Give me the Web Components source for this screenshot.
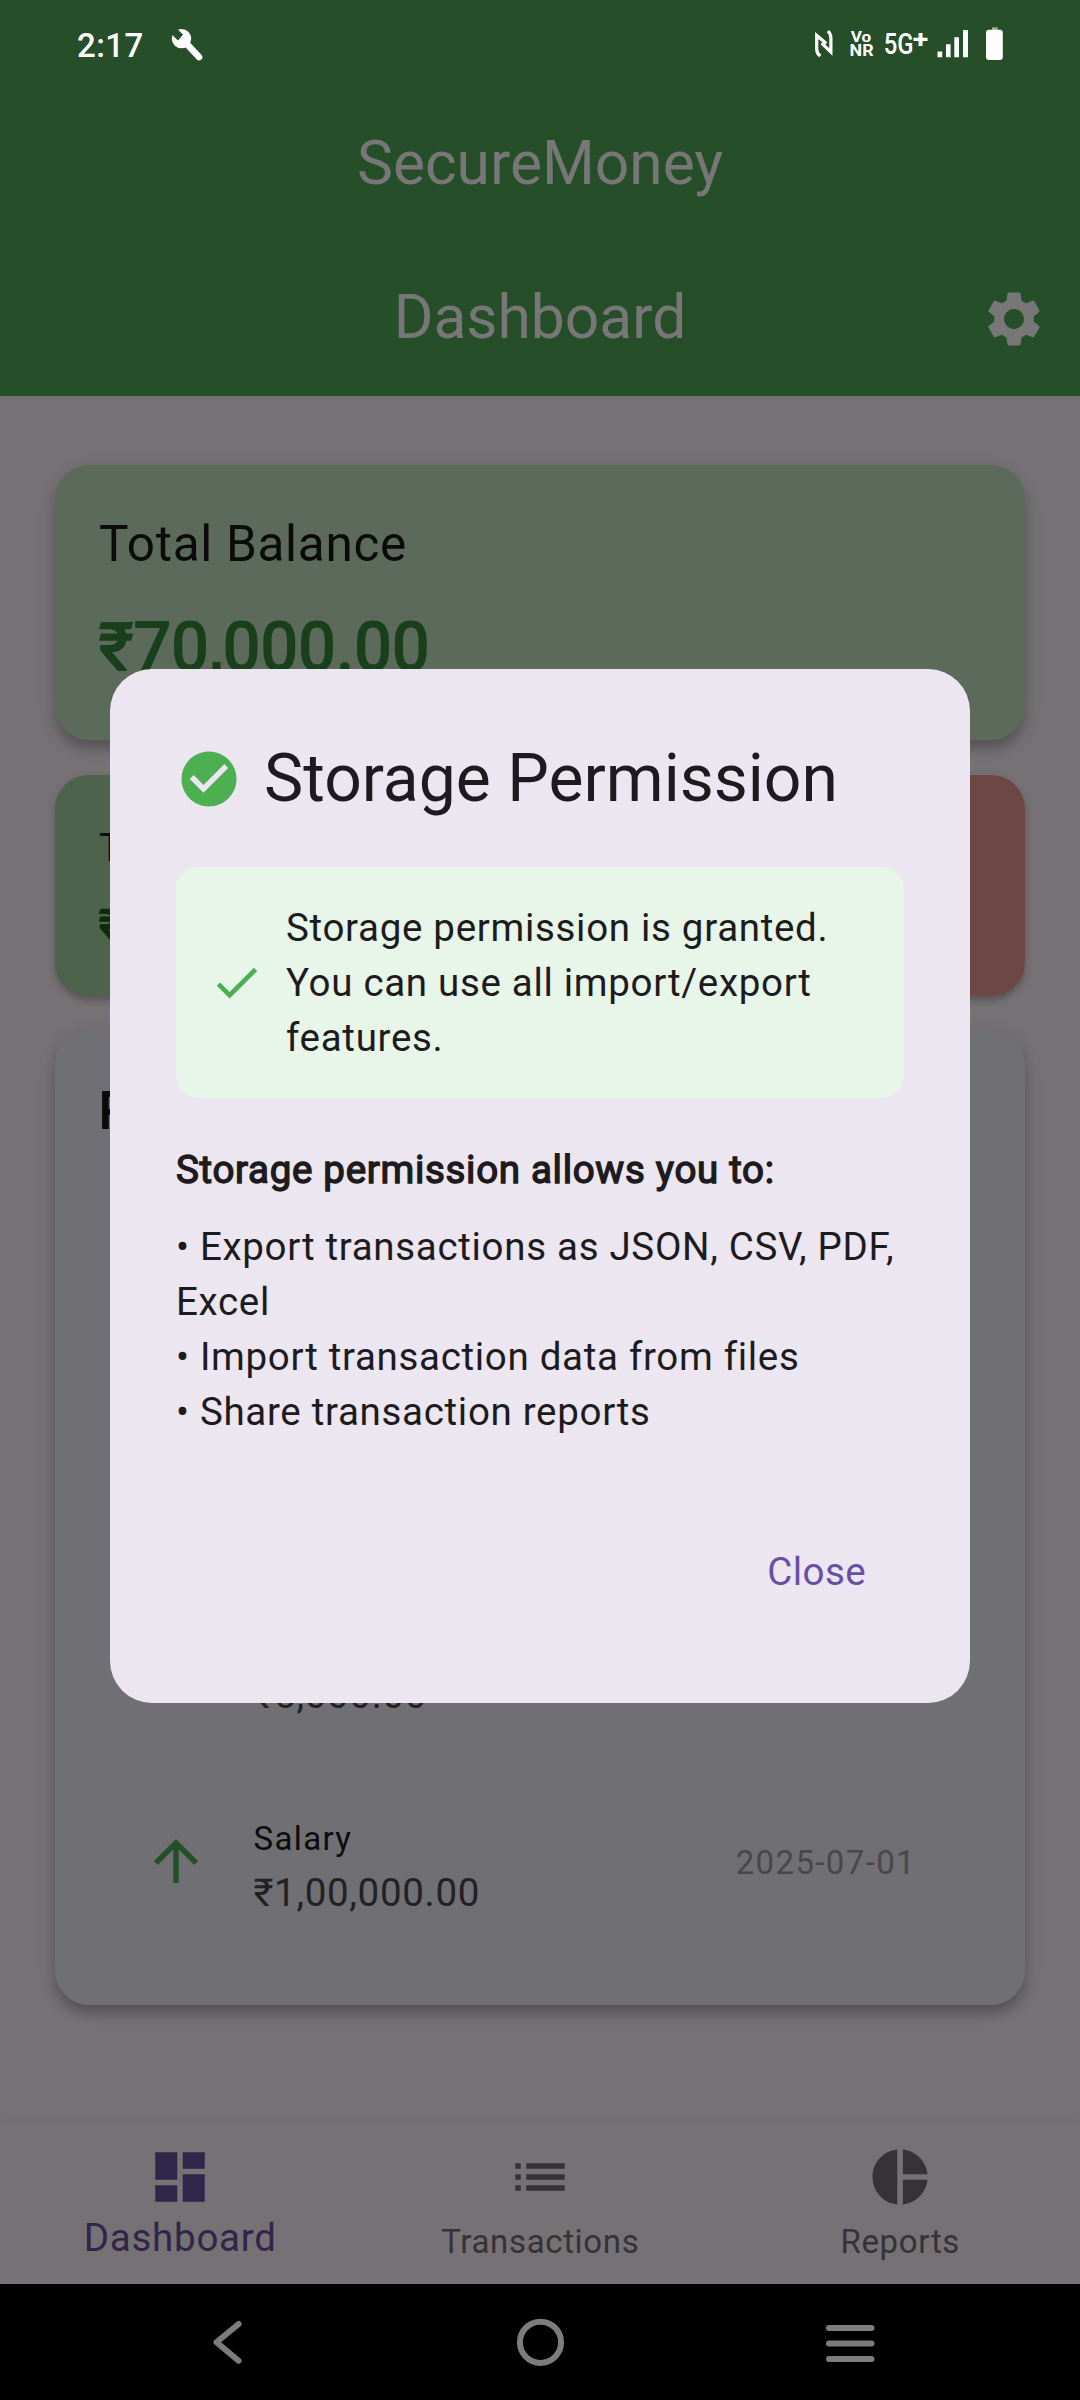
<!DOCTYPE html>
<html lang="en">
<head>
<meta charset="utf-8">
<title>SecureMoney</title>
<style>
html,body{margin:0;padding:0;background:#000}
body{width:1080px;height:2400px;overflow:hidden;font-family:Roboto,"Noto Sans",sans-serif;-webkit-font-smoothing:antialiased}
</style>
</head>
<body>
<money-app></money-app>
<script>
const def = (name, html) => {
  const t = document.createElement('template');
  t.innerHTML = html;
  customElements.define(name, class extends HTMLElement {
    constructor() {
      super();
      this.attachShadow({mode: 'open'}).appendChild(t.content.cloneNode(true));
    }
  });
};

const ICONS = {
  settings: 'M19.14 12.94c.04-.3.06-.61.06-.94 0-.32-.02-.64-.07-.94l2.03-1.58c.18-.14.23-.41.12-.61l-1.92-3.32c-.12-.22-.37-.29-.59-.22l-2.39.96c-.5-.38-1.03-.7-1.62-.94l-.36-2.54c-.04-.24-.24-.41-.48-.41h-3.84c-.24 0-.43.17-.47.41l-.36 2.54c-.59.24-1.13.57-1.62.94l-2.39-.96c-.22-.08-.47 0-.59.22L2.74 8.87c-.12.21-.08.47.12.61l2.03 1.58c-.05.3-.09.63-.09.94s.02.64.07.94l-2.03 1.58c-.18.14-.23.41-.12.61l1.92 3.32c.12.22.37.29.59.22l2.39-.96c.5.38 1.03.7 1.62.94l.36 2.54c.05.24.24.41.48.41h3.84c.24 0 .44-.17.47-.41l.36-2.54c.59-.24 1.13-.56 1.62-.94l2.39.96c.22.08.47 0 .59-.22l1.92-3.32c.12-.22.07-.47-.12-.61l-2.01-1.58zM12 15.6c-1.98 0-3.6-1.62-3.6-3.6s1.62-3.6 3.6-3.6 3.6 1.62 3.6 3.6-1.62 3.6-3.6 3.6z',
  circle: 'M12 2C6.48 2 2 6.48 2 12s4.48 10 10 10 10-4.48 10-10S17.52 2 12 2zm-2 15l-5-5 1.41-1.41L10 14.17l7.59-7.59L19 8l-9 9z',
  check: 'M9 16.17L4.83 12l-1.42 1.41L9 19 21 7l-1.41-1.41z',
  up: 'M4 12l1.41 1.41L11 7.83V20h2V7.83l5.58 5.59L20 12l-8-8-8 8z',
  dashboard: 'M3 13h8V3H3v10zm0 8h8v-6H3v6zm10 0h8V11h-8v10zm0-18v6h8V3h-8z',
  list: 'M3 13h2v-2H3v2zm0 4h2v-2H3v2zm0-8h2V7H3v2zm4 4h14v-2H7v2zm0 4h14v-2H7v2zM7 7v2h14V7H7z',
  pie: 'M11 2v20c-5.07-.5-9-4.79-9-10s3.93-9.5 9-10zm2.03 0v8.99H22c-.47-4.74-4.24-8.52-8.97-8.99zm0 11.01V22c4.74-.47 8.5-4.25 8.97-8.99h-8.97z'
};
customElements.define('md-icon', class extends HTMLElement {
  constructor() {
    super();
    this.attachShadow({mode: 'open'}).innerHTML =
      `<style>:host{display:block;flex:none;width:66px;height:66px}svg{display:block;width:100%;height:100%;fill:currentColor}</style>
       <svg viewBox="0 0 24 24"><path d="${ICONS[this.getAttribute('name')]}"/></svg>`;
  }
});

def('status-bar', `<style>
:host{display:flex;height:88px;color:#fff}
.time{font-size:33px;font-weight:500;line-height:91px;letter-spacing:.4px;padding-left:77px;width:90px}
svg{display:block;flex:none;height:88px;fill:#fff}
.gap{flex:1}
text{font-family:Roboto,sans-serif}
</style>
<div class="time">2:17</div>
<svg width="46" viewBox="167 0 46 88"><circle cx="181.5" cy="38.6" r="9.7"/><path d="M168 32L174 26L183 34.6L178 40.4L172 34.8L170 37z" fill="#254e29"/><path d="M184 41L199 57" stroke="#fff" stroke-width="6.6" stroke-linecap="round"/></svg>
<div class="gap"></div>
<svg width="35" viewBox="810 0 35 88"><g fill="none" stroke="#fff" stroke-width="3.2"><path d="M820.3 56Q816.7 53.5 816.7 49V35.5L826.3 43.5"/><path d="M828 31Q830.9 34 830.9 38V52L821.6 43.2"/></g></svg>
<svg width="35" viewBox="845 0 35 88"><text x="850.8" y="42.4" font-size="15" font-weight="700" textLength="20.5" lengthAdjust="spacingAndGlyphs">Vo</text><text x="849.6" y="56.4" font-size="17.2" font-weight="700" textLength="24" lengthAdjust="spacingAndGlyphs">NR</text></svg>
<svg width="52" viewBox="880 0 52 88"><text x="883.8" y="53.9" font-size="29.4" font-weight="500" textLength="29.8" lengthAdjust="spacingAndGlyphs">5G</text><text x="912.8" y="47.8" font-size="25" font-weight="700" textLength="15.5" lengthAdjust="spacingAndGlyphs">+</text></svg>
<svg width="43" viewBox="932 0 43 88"><path d="M937.5 51.5h4.7v5.8h-4.7zM946 44.3h4.6v13H946zM954.3 37.3h4.7v20h-4.7zM963 30h5v27.3h-5z"/></svg>
<svg width="105" viewBox="975 0 105 88"><path d="M992 27.3h5.8v3H992z" opacity=".55"/><rect x="986" y="29.7" width="16.8" height="30.2" rx="3"/></svg>`);

def('app-header', `<style>
:host{display:flex;flex-direction:column;height:396px;background:#254e29;color:#777;font-size:60.5px}
.bar{display:flex;align-items:center;height:154px;line-height:152px}
.side{flex:1;display:flex;justify-content:flex-end;padding-right:33px;height:66px}
.side:first-child{padding:0 0 0 33px}
.t{height:154px}
</style>
<status-bar></status-bar>
<div class="bar"><div class="side"></div><div class="t">SecureMoney</div><div class="side"></div></div>
<div class="bar"><div class="side"></div><div class="t">Dashboard</div><div class="side"><md-icon name="settings"></md-icon></div></div>`);

def('m-card', `<style>
:host{display:block;box-sizing:border-box;border-radius:34px;padding:44px;background:var(--bg);box-shadow:var(--sh,0 9px 14px -2px rgba(0,0,0,.26),0 5px 20px rgba(0,0,0,.09))}
</style><slot></slot>`);

def('tx-row', `<style>
:host{display:flex;height:198px;align-items:center;padding:0 65px 0 44px}
.i{width:110.5px;color:#235026}
.m{flex:1;padding-top:11px}
.n{font-size:33px;line-height:52px;height:52px;letter-spacing:1.375px;color:#0c0b0d}
.a{font-size:38.5px;line-height:56px;letter-spacing:.6875px;color:#222126}
.d{font-size:33px;line-height:40px;padding-top:3px;letter-spacing:1.375px;color:#484848}
</style><div class="i"><slot name="icon"></slot></div><div class="m"><div class="n"><slot name="name"></slot></div><div class="a"><slot name="amount"></slot></div></div><div class="d"><slot name="date"></slot></div>`);

def('dash-body', `<style>
:host{display:flex;flex-direction:column;box-sizing:border-box;height:1728px;padding:68.5px 55px 0;background:#767175;color:#0b0b0b}
.total{height:275.5px;--bg:#5c6a5b}
.lbl{font-size:49.5px;line-height:70px;letter-spacing:.6875px}
.amt{font-size:66px;line-height:89px;margin-top:24px;letter-spacing:.6875px;color:#19401b;-webkit-text-stroke:2.2px #19401b}
.row{display:flex;gap:22px;margin-top:35px}
.row m-card{flex:1;height:221px;--sh:0 5px 7px -1px rgba(0,0,0,.22),0 2px 11px rgba(0,0,0,.07)}
.inc{--bg:#4d634c}.exp{--bg:#6d4744}
.l{font-size:38.5px;line-height:57px;letter-spacing:.6875px}
.v{font-size:44px;line-height:60px;margin-top:20px;color:#0b2c0e;-webkit-text-stroke:1.8px #0b2c0e}
.recent{margin-top:34px;height:974.5px;--bg:#706f73}
h2{margin:0 0 20px;font-size:49.5px;font-weight:400;line-height:74px;letter-spacing:.6875px;-webkit-text-stroke:2px #0b0b0b}
.space{height:396px}
</style>
<m-card class="total"><div class="lbl">Total Balance</div><div class="amt">₹70,000.00</div></m-card>
<div class="row"><m-card class="inc"><div class="l">Total Income</div><div class="v">₹1,00,000.00</div></m-card><m-card class="exp"></m-card></div>
<m-card class="recent"><h2>Recent Transactions</h2><div class="space"></div>
<tx-row><span slot="amount">₹5,000.00</span></tx-row>
<tx-row><md-icon slot="icon" name="up"></md-icon><span slot="name">Salary</span><span slot="amount">₹1,00,000.00</span><span slot="date">2025-07-01</span></tx-row></m-card>`);

def('tab-item', `<style>
:host{flex:1;display:flex;flex-direction:column;align-items:center;padding-top:20px;color:#353337;font-size:33px;line-height:63.5px;letter-spacing:.65px}
:host([selected]){color:#2f2649;font-size:38.5px;line-height:55.6px;letter-spacing:.75px}
</style><slot name="icon"></slot><slot></slot>`);

def('tab-bar', `<style>
:host{display:flex;height:160px;background:#767175;box-shadow:0 -5px 6px rgba(108,114,112,.45)}
span{padding-left:.5px}
</style>
<tab-item selected><md-icon slot="icon" name="dashboard"></md-icon><span>Dashboard</span></tab-item>
<tab-item><md-icon slot="icon" name="list"></md-icon><span>Transactions</span></tab-item>
<tab-item><md-icon slot="icon" name="pie"></md-icon><span>Reports</span></tab-item>`);

def('nav-bar', `<style>
:host{display:flex;height:116px;background:#000;justify-content:center;gap:230px}
svg{display:block;width:80px;height:116px;fill:none;stroke:#7c7c7c;stroke-width:6;stroke-linecap:round;stroke-linejoin:round}
</style>
<svg viewBox="190 2284 80 116"><path d="M238.6 2324L216.5 2342.3L238.6 2360.7"/></svg>
<svg viewBox="500 2284 80 116"><circle cx="540.5" cy="2342.3" r="20.6"/></svg>
<svg viewBox="810 2284 80 116"><path d="M829 2328h42.5M829 2343.5h42.5M829 2359h42.5"/></svg>`);

def('permission-dialog', `<style>
:host{display:flex;flex-direction:column;box-sizing:border-box;width:860px;height:1034px;border-radius:42px;background:#ece6f0;padding:66px;color:#1d1b20;font-size:38.5px;line-height:55px;letter-spacing:.6875px}
.head{display:flex;align-items:center;gap:22px;height:88px;font-size:66px;line-height:87px;letter-spacing:0}
.head md-icon,.ok md-icon{color:#4caf50}
.ok{display:flex;align-items:center;gap:22px;box-sizing:border-box;margin-top:44px;height:231px;padding:33px;border-radius:22px;background:#e8f5e9}
.ok md-icon{width:55px;height:55px}
.b{margin-top:44px;-webkit-text-stroke:1.4px #1d1b20}
.list{margin-top:22px}
.act{display:flex;justify-content:flex-end;margin-top:105px;padding-right:38px;color:#6750a4;letter-spacing:.4px}
</style>
<div class="head"><md-icon name="circle"></md-icon><span>Storage Permission</span></div>
<div class="ok"><md-icon name="check"></md-icon><div>Storage permission is granted.<br>You can use all import/export<br>features.</div></div>
<div class="b">Storage permission allows you to:</div>
<div class="list"><div>• Export transactions as JSON, CSV, PDF, Excel</div><div>• Import transaction data from files</div><div>• Share transaction reports</div></div>
<div class="act">Close</div>`);

def('money-app', `<style>
:host{display:flex;flex-direction:column;position:relative;width:1080px;height:2400px;overflow:hidden}
tab-bar{position:relative}
.scrim{position:absolute;left:0;right:0;top:0;height:2371px;display:flex;align-items:center;justify-content:center}
</style>
<app-header></app-header><dash-body></dash-body><tab-bar></tab-bar><nav-bar></nav-bar>
<div class="scrim"><permission-dialog></permission-dialog></div>`);
</script>
</body>
</html>
